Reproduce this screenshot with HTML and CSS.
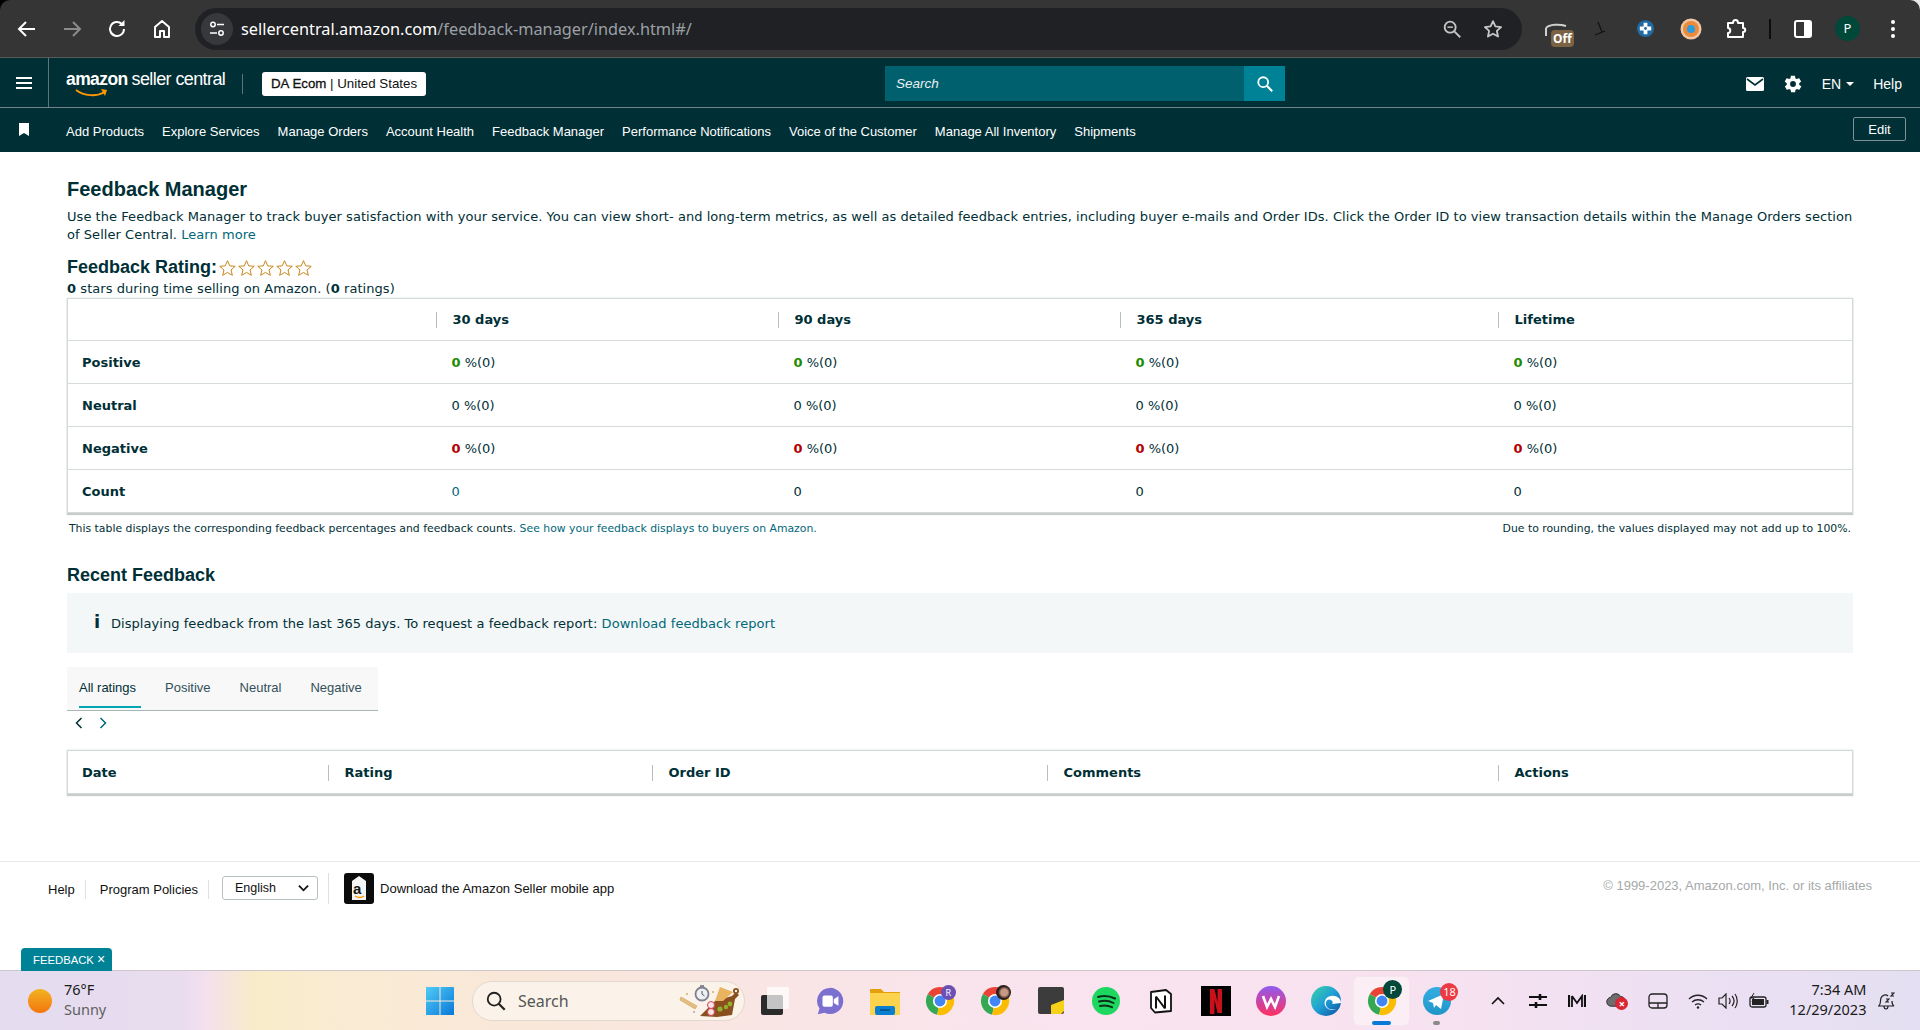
FILE: index.html
```html
<!DOCTYPE html>
<html lang="en">
<head>
    <meta charset="UTF-8">
    <meta name="viewport" content="width=device-width, initial-scale=1.0">
    <title>Feedback Manager</title>
    <link rel="stylesheet" href="styles.css">
</head>
<body>
    <svg class="defs" width="0" height="0">
        <symbol id="chrome" viewBox="0 0 32 32">
            <path d="M16 16L3 8.500A15 15 0 0 1 29 8.500z" fill="#ea4335"/>
            <path d="M16 16L3 8.500A15 15 0 0 0 13 30.700z" fill="#34a853"/>
            <path d="M16 16L29 8.500A15 15 0 0 1 13 30.700z" fill="#fbbc04"/>
            <circle cx="16" cy="16" r="7.500" fill="#fff"/>
            <circle cx="16" cy="16" r="5.800" fill="#4285f4"/>
        </symbol>
        <symbol id="star" viewBox="0.400 0.400 15.200 14.500">
            <path d="M8 1l2 4.700 5 .4-3.800 3.300 1.200 4.900L8 11.700l-4.400 2.600 1.200-4.900L1 6.100l5-.4z" fill="#fff" stroke="#c7861c" stroke-width=".9" stroke-linejoin="round"/>
        </symbol>
    </svg>

    <div class="browser">
        <div class="browser-nav">
            <svg class="bicon" viewBox="0 0 24 24"><path d="M20 12H5M11 5l-7 7 7 7" fill="none" stroke="#fff" stroke-width="2"/></svg>
            <svg class="bicon" viewBox="0 0 24 24"><path d="M4 12h15M13 5l7 7-7 7" fill="none" stroke="#8a8b8d" stroke-width="2"/></svg>
            <svg class="bicon" viewBox="0 0 24 24"><path d="M19 12a7 7 0 1 1-2.200-5.100" fill="none" stroke="#fff" stroke-width="2"/><path d="M19.500 3v6h-6z" fill="#fff"/></svg>
            <svg class="bicon" viewBox="0 0 24 24"><path d="M5 20V10l7-6 7 6v10h-5v-6h-4v6z" fill="none" stroke="#fff" stroke-width="2" stroke-linejoin="round"/></svg>
        </div>
        <div class="omnibox">
            <span class="site-info">
                <svg viewBox="0 0 20 20" width="20" height="20"><circle cx="6" cy="5.500" r="2.200" fill="none" stroke="#fff" stroke-width="1.500"/><path d="M10 5.500h7M3 14h7" stroke="#fff" stroke-width="1.700"/><circle cx="14" cy="14" r="2.200" fill="none" stroke="#fff" stroke-width="1.500"/></svg>
            </span>
            <span class="url">sellercentral.amazon.com<span class="url-path">/feedback-manager/index.html#/</span></span>
            <svg class="omni-icon" viewBox="0 0 24 24"><circle cx="10" cy="10" r="6" fill="none" stroke="#c4c7c5" stroke-width="2"/><path d="M14.500 14.500L21 21" stroke="#c4c7c5" stroke-width="2"/><path d="M7 10h6" stroke="#c4c7c5" stroke-width="1.600"/></svg>
            <svg class="omni-icon" viewBox="0 0 24 24"><path d="M12 3.500l2.600 5.700 6.200.7-4.600 4.200 1.300 6.100-5.500-3.100-5.500 3.100 1.300-6.100-4.600-4.200 6.200-.7z" fill="none" stroke="#c4c7c5" stroke-width="2" stroke-linejoin="round"/></svg>
        </div>
        <div class="browser-ext">
            <span class="ext ext-off">
                <svg viewBox="0 0 30 30" width="30" height="30"><path d="M5 14c3-4 14-4 20-2" fill="none" stroke="#cfcfcf" stroke-width="2"/><path d="M5 14v8" stroke="#cfcfcf" stroke-width="2"/></svg>
                <span class="off-badge">Off</span>
            </span>
            <span class="ext">
                <svg viewBox="0 0 24 24" width="24" height="24"><path d="M6 18L16 14M9 5l4 10" stroke="#111" stroke-width="1.200" fill="none"/></svg>
            </span>
            <span class="ext">
                <svg viewBox="0 0 20 20" width="19" height="19"><circle cx="10" cy="10" r="9" fill="#1f6aa5"/><path d="M8 4h4v4h4v4h-4v4H8v-4H4V8h4z" fill="#fff"/><circle cx="10" cy="10" r="1.500" fill="#1f6aa5"/></svg>
            </span>
            <span class="ext">
                <svg viewBox="0 0 22 22" width="22" height="22"><circle cx="11" cy="11" r="10.500" fill="#f2c6a4"/><circle cx="11" cy="11" r="8" fill="#ea8a3a"/><circle cx="11" cy="11" r="4" fill="#2a9de0"/></svg>
            </span>
            <span class="ext">
                <svg viewBox="0 0 24 24" width="24" height="24"><path d="M4 6h5c0-4 5-4 5 0h5v5c3 0 3 4 0 4v5H4v-4c3 0 3-5 0-5z" fill="none" stroke="#fff" stroke-width="2" stroke-linejoin="round"/></svg>
            </span>
            <span class="ext-sep"></span>
            <span class="ext">
                <svg viewBox="0 0 20 20" width="20" height="20"><rect x="2" y="2" width="16" height="16" rx="2" fill="none" stroke="#fff" stroke-width="2"/><rect x="11" y="2" width="7" height="16" fill="#fff"/></svg>
            </span>
            <span class="avatar">P</span>
            <span class="ext">
                <svg viewBox="0 0 6 20" width="6" height="20"><circle cx="3" cy="3" r="2" fill="#fff"/><circle cx="3" cy="10" r="2" fill="#fff"/><circle cx="3" cy="17" r="2" fill="#fff"/></svg>
            </span>
        </div>
    </div>

    <header class="top-bar">
        <button class="menu-btn" aria-label="Menu">
            <svg viewBox="0 0 16 12" width="16" height="12"><path d="M0 1h16M0 6h16M0 11h16" stroke="#fff" stroke-width="2"/></svg>
        </button>
        <div class="logo">
            <span class="logo-amazon">amazon</span><span class="logo-seller">seller central</span>
            <svg class="logo-smile" viewBox="0 0 34 10" width="34" height="10"><path d="M1 2c8 6 20 7 29 2" fill="none" stroke="#f90" stroke-width="2"/><path d="M26 1l6 1-2 6z" fill="#f90"/></svg>
        </div>
        <span class="logo-sep"></span>
        <div class="store-badge"><b>DA Ecom</b> | United States</div>
        <form class="search">
            <span class="search-input">Search</span>
            <span class="search-btn">
                <svg viewBox="0 0 20 20" width="18" height="18"><circle cx="8" cy="8" r="5.500" fill="none" stroke="#fff" stroke-width="2"/><path d="M12 12l6 6" stroke="#fff" stroke-width="2.400"/></svg>
            </span>
        </form>
        <div class="top-right">
            <svg viewBox="0 0 18 14" width="18" height="14"><rect width="18" height="14" rx="1.500" fill="#fff"/><path d="M1 2l8 6 8-6" fill="none" stroke="#002f36" stroke-width="1.600"/></svg>
            <svg viewBox="0 0 24 24" width="20" height="20"><path fill="#fff" d="M19.400 13c.1-.3.100-.7.100-1s0-.7-.1-1l2.100-1.600c.2-.2.200-.4.100-.6l-2-3.500c-.1-.2-.4-.3-.6-.2l-2.500 1c-.5-.4-1.100-.7-1.700-1l-.4-2.600c0-.3-.2-.4-.5-.4h-4c-.2 0-.4.100-.5.400l-.4 2.600c-.6.300-1.200.6-1.700 1l-2.500-1c-.2-.1-.5 0-.6.200l-2 3.500c-.1.200-.1.400.1.600L4.600 11c-.1.300-.1.700-.1 1s0 .7.100 1l-2.100 1.600c-.2.200-.2.400-.1.600l2 3.500c.1.200.4.300.6.200l2.500-1c.5.400 1.100.7 1.700 1l.4 2.600c0 .3.200.4.500.4h4c.3 0 .5-.1.500-.4l.4-2.600c.6-.3 1.200-.6 1.700-1l2.500 1c.2.100.5 0 .6-.2l2-3.500c.1-.2.100-.4-.1-.6zM12 15.500a3.500 3.500 0 1 1 0-7 3.500 3.500 0 0 1 0 7z"/></svg>
            <span class="lang">EN<i class="caret"></i></span>
            <span>Help</span>
        </div>
    </header>

    <nav class="nav-bar">
        <svg class="bookmark" viewBox="0 0 10 13" width="10" height="13"><path d="M0 0h10v13L5 10l-5 3z" fill="#fff"/></svg>
        <a>Add Products</a>
        <a>Explore Services</a>
        <a>Manage Orders</a>
        <a>Account Health</a>
        <a>Feedback Manager</a>
        <a>Performance Notifications</a>
        <a>Voice of the Customer</a>
        <a>Manage All Inventory</a>
        <a>Shipments</a>
        <button class="edit-btn">Edit</button>
    </nav>

    <main class="content">
        <h1>Feedback Manager</h1>
        <p class="intro">Use the Feedback Manager to track buyer satisfaction with your service. You can view short- and long-term metrics, as well as detailed feedback entries, including buyer e-mails and Order IDs. Click the Order ID to view transaction details within the Manage Orders section of Seller Central. <a class="link">Learn more</a></p>

        <div class="rating-head">
            <h2>Feedback Rating:</h2>
            <div class="stars">
                <svg width="17" height="16"><use href="#star"/></svg>
                <svg width="17" height="16"><use href="#star"/></svg>
                <svg width="17" height="16"><use href="#star"/></svg>
                <svg width="17" height="16"><use href="#star"/></svg>
                <svg width="17" height="16"><use href="#star"/></svg>
            </div>
        </div>
        <p class="rating-sub"><b>0</b> stars during time selling on Amazon. (<b>0</b> ratings)</p>

        <table class="card-table metrics">
            <thead>
                <tr>
                    <th></th>
                    <th><span>30 days</span></th>
                    <th><span>90 days</span></th>
                    <th><span>365 days</span></th>
                    <th><span>Lifetime</span></th>
                </tr>
            </thead>
            <tbody>
                <tr><th>Positive</th><td><b class="good">0</b> %(0)</td><td><b class="good">0</b> %(0)</td><td><b class="good">0</b> %(0)</td><td><b class="good">0</b> %(0)</td></tr>
                <tr><th>Neutral</th><td>0 %(0)</td><td>0 %(0)</td><td>0 %(0)</td><td>0 %(0)</td></tr>
                <tr><th>Negative</th><td><b class="bad">0</b> %(0)</td><td><b class="bad">0</b> %(0)</td><td><b class="bad">0</b> %(0)</td><td><b class="bad">0</b> %(0)</td></tr>
                <tr><th>Count</th><td><a class="link">0</a></td><td>0</td><td>0</td><td>0</td></tr>
            </tbody>
        </table>
        <div class="table-note">
            <span>This table displays the corresponding feedback percentages and feedback counts. <a class="link">See how your feedback displays to buyers on Amazon.</a></span>
            <span>Due to rounding, the values displayed may not add up to 100%.</span>
        </div>

        <h2 class="recent-title">Recent Feedback</h2>
        <div class="alert">
            <b class="alert-i">i</b>
            <span>Displaying feedback from the last 365 days. To request a feedback report: <a class="link">Download feedback report</a></span>
        </div>

        <div class="tabs">
            <a class="tab active">All ratings</a>
            <a class="tab">Positive</a>
            <a class="tab">Neutral</a>
            <a class="tab">Negative</a>
        </div>
        <div class="pager">
            <svg viewBox="0 0 8 12" width="8" height="12"><path d="M6.500 1L1.500 6l5 5" fill="none" stroke="#002f36" stroke-width="1.500"/></svg>
            <svg viewBox="0 0 8 12" width="8" height="12"><path d="M1.500 1l5 5-5 5" fill="none" stroke="#00687a" stroke-width="1.500"/></svg>
        </div>

        <table class="card-table recent">
            <thead>
                <tr>
                    <th>Date</th>
                    <th><span>Rating</span></th>
                    <th><span>Order ID</span></th>
                    <th><span>Comments</span></th>
                    <th><span>Actions</span></th>
                </tr>
            </thead>
        </table>
    </main>

    <footer class="footer">
        <a class="foot-link">Help</a>
        <a class="foot-link">Program Policies</a>
        <div class="foot-select">
            <span>English</span>
            <svg viewBox="0 0 12 8" width="11" height="8"><path d="M1 1.500l5 5 5-5" fill="none" stroke="#111" stroke-width="2"/></svg>
        </div>
        <div class="foot-app">
            <span class="app-icon">
                <svg viewBox="0 0 30 31" width="30" height="31"><rect width="30" height="31" rx="3" fill="#0b0b0b"/><path d="M8 8l7-5 7 5v19H8z" fill="#f4f4f4"/><path d="M11 23c3 2 6 2 9 0" fill="none" stroke="#f90" stroke-width="1.500"/></svg>
                <span class="app-a">a</span>
            </span>
            Download the Amazon Seller mobile app
        </div>
        <span class="copyright">© 1999-2023, Amazon.com, Inc. or its affiliates</span>
        <div class="feedback-tab">FEEDBACK <span class="feedback-x">×</span></div>
    </footer>

    <div class="taskbar">
        <div class="weather">
            <span class="sun"></span>
            <div class="weather-text">
                <span>76°F</span>
                <span class="weather-sub">Sunny</span>
            </div>
        </div>
        <div class="tb-start">
            <svg viewBox="0 0 30 30" width="30" height="30">
                <defs><linearGradient id="win" x1="0" y1="0" x2="1" y2="1"><stop offset="0" stop-color="#4fcbf7"/><stop offset="1" stop-color="#0a78d7"/></linearGradient></defs>
                <path d="M1 1h13.500v13.500H1zM15.500 1H29v13.500H15.500zM1 15.500h13.500V29H1zM15.500 15.500H29V29H15.500z" fill="url(#win)"/>
            </svg>
        </div>
        <div class="tb-search">
            <svg viewBox="0 0 24 24" width="22" height="22"><circle cx="10" cy="10" r="7" fill="none" stroke="#222" stroke-width="2"/><path d="M15 15l6.500 6.500" stroke="#222" stroke-width="2.400"/></svg>
            <span>Search</span>
            <svg class="tb-search-art" viewBox="0 0 64 36" width="64" height="36">
                <circle cx="24" cy="11" r="6.500" fill="#eef0f4" stroke="#7d7f8c" stroke-width="1.800"/>
                <path d="M24 8v3l2.500 2" stroke="#555" fill="none"/>
                <path d="M22 3h4" stroke="#7d7f8c" stroke-width="1.800"/>
                <path d="M3 14l16 9-2 3-15-9z" fill="#e4bf83" stroke="#c99a55" stroke-width=".6"/>
                <circle cx="9" cy="11" r="1" fill="#d5b05c"/>
                <circle cx="16" cy="29" r="1" fill="#a9a4c8"/>
                <circle cx="35" cy="9" r="1" fill="#d5b05c"/>
                <path d="M22 33l15-15 17-5 4-4 3 3-4 4-3 16-15 2z" fill="#8a4f1e"/>
                <circle cx="58" cy="8" r="3" fill="#8a4f1e"/>
                <circle cx="58" cy="8" r="1.200" fill="#fbf3e9"/>
                <path d="M37 18l5-14 13 5-10 9z" fill="#e9b35f"/>
                <circle cx="42" cy="26" r="2.600" fill="#94ae2f"/>
                <circle cx="48" cy="24" r="2.200" fill="#94ae2f"/>
                <circle cx="52" cy="21" r="2.400" fill="#94ae2f"/>
                <circle cx="33" cy="22" r="3.500" fill="#f7e3e6" stroke="#d8435a"/>
                <circle cx="33" cy="29" r="3.500" fill="#f7e3e6" stroke="#d8435a"/>
            </svg>
        </div>
        <div class="tb-apps">
            <span class="tb-app">
                <svg viewBox="0 0 32 32" width="32" height="32"><rect x="2" y="10" width="22" height="20" rx="2" fill="#2b2b2b"/><rect x="8" y="2" width="22" height="22" rx="1" fill="#fff" fill-opacity=".72"/></svg>
            </span>
            <span class="tb-app">
                <svg viewBox="0 0 32 32" width="30" height="32"><path d="M16 2a14 14 0 1 1-6 26.600L3 30l1.800-6A14 14 0 0 1 16 2z" fill="#7b6fd0"/><rect x="8" y="10" width="11" height="12" rx="2" fill="#fff"/><path d="M20 14l5-3v10l-5-3z" fill="#fff"/></svg>
            </span>
            <span class="tb-app">
                <svg viewBox="0 0 30 30" width="30" height="30"><path d="M0 3h11l3 3h16v23H0z" fill="#e3a008"/><path d="M0 7h30v22H0z" fill="#fcd34d"/><rect x="5" y="20" width="20" height="9" rx="2" fill="#0a7fd0"/><path d="M10 24h10" stroke="#054b86" stroke-width="1.500"/></svg>
            </span>
            <span class="tb-app tb-badged">
                <svg width="30" height="30"><use href="#chrome"/></svg>
                <span class="mini mini-r">R</span>
            </span>
            <span class="tb-app tb-badged">
                <svg width="30" height="30"><use href="#chrome"/></svg>
                <span class="mini mini-photo"></span>
            </span>
            <span class="tb-app">
                <svg viewBox="0 0 26 28" width="26" height="28"><rect width="26" height="27" rx="2" fill="#3c3c3c"/><path d="M13 27v-9l13-5v11l-3 3z" fill="#f7d118"/></svg>
            </span>
            <span class="tb-app">
                <svg viewBox="0 0 28 28" width="28" height="28"><circle cx="14" cy="14" r="14" fill="#1ed760"/><path d="M6 10c6-2 12-1 17 1.500M7 14.500c5-1.500 10-1 14.500 1.500M8 19c4-1 8-.700 12 1.200" fill="none" stroke="#0c2f1a" stroke-width="2" stroke-linecap="round"/></svg>
            </span>
            <span class="tb-app">
                <svg viewBox="0 0 24 26" width="24" height="26"><path d="M2 4l15-2 5 4v17l-16 1.500L2 20z" fill="#fff" stroke="#111" stroke-width="1.800" stroke-linejoin="round"/><path d="M7 8.500v12M7 8.500l9 12M16 7.500v13" fill="none" stroke="#111" stroke-width="2"/></svg>
            </span>
            <span class="tb-app">
                <svg viewBox="0 0 30 30" width="30" height="30"><rect width="30" height="30" fill="#000"/><path d="M9 3h4.500l3 13V3H21v24h-4.500l-3-13v14L9 28z" fill="#c8111a"/></svg>
            </span>
            <span class="tb-app">
                <svg viewBox="0 0 30 30" width="30" height="30"><defs><linearGradient id="wps" x1="0" y1="0" x2="0" y2="1"><stop offset="0" stop-color="#8f5bf0"/><stop offset="1" stop-color="#ff2f5f"/></linearGradient></defs><circle cx="15" cy="15" r="15" fill="url(#wps)"/><path d="M7 10l4 11 4-8 4 8 4-11" fill="none" stroke="#fff" stroke-width="2.600"/></svg>
            </span>
            <span class="tb-app">
                <svg viewBox="0 0 30 30" width="30" height="30"><defs><linearGradient id="edge" x1="0" y1="0" x2="1" y2="1"><stop offset="0" stop-color="#3bd3a5"/><stop offset=".5" stop-color="#1f9fd6"/><stop offset="1" stop-color="#0c4f9e"/></linearGradient></defs><circle cx="15" cy="15" r="15" fill="url(#edge)"/><path d="M30 17c0-5-5-8-10-7-6 1-8 7-5 11 2 3 7 4 11 2-8 2-12-2-11-7 1-3 4-3 5-2 2 1 2 3 1 4z" fill="#fff"/></svg>
            </span>
            <span class="tb-app tb-active tb-badged">
                <svg width="30" height="30"><use href="#chrome"/></svg>
                <span class="mini mini-p">P</span>
                <i class="tb-run"></i>
            </span>
            <span class="tb-app tb-badged">
                <svg viewBox="0 0 28 28" width="28" height="28"><defs><linearGradient id="tg" x1="0" y1="0" x2="0" y2="1"><stop offset="0" stop-color="#37aee2"/><stop offset="1" stop-color="#1e96c8"/></linearGradient></defs><circle cx="14" cy="14" r="14" fill="url(#tg)"/><path d="M5 14l16-7-3 15-5-4-2 3-1-5z" fill="#fff"/></svg>
                <span class="tg-count">18</span>
                <i class="tb-idle"></i>
            </span>
        </div>
        <div class="tray">
            <svg class="tray-chevron" viewBox="0 0 16 10" width="16" height="10"><path d="M2 8l6-6 6 6" fill="none" stroke="#111" stroke-width="1.600"/></svg>
            <svg class="tray-sliders" viewBox="0 0 18 16" width="18" height="16"><path d="M0 4h18M0 12h18" stroke="#111" stroke-width="2.200"/><path d="M11 1v6M7 9v6" stroke="#111" stroke-width="2.600"/></svg>
            <svg class="tray-m" viewBox="0 0 18 14" width="18" height="14"><path d="M1 1v12M17 1v12" stroke="#111" stroke-width="2.200"/><path d="M4 2l5 7 5-7v11M4 2v11" fill="none" stroke="#111" stroke-width="1.800"/></svg>
            <span class="tray-cloud">
                <svg viewBox="0 0 24 18" width="22" height="16"><path d="M6 16a5 5 0 0 1-1-10 6 6 0 0 1 11-1 5 5 0 0 1 3 9l-4 2z" fill="#6d6d6d" stroke="#222"/></svg>
                <i class="cloud-x">×</i>
            </span>
            <svg class="tray-pad" viewBox="0 0 20 16" width="20" height="16"><rect x="1" y="1" width="18" height="14" rx="3" fill="none" stroke="#222" stroke-width="1.300"/><path d="M1 10h18M10 10v5" stroke="#222" stroke-width="1.300"/></svg>
            <svg class="tray-wifi" viewBox="0 0 20 16" width="20" height="16"><path d="M1 6c5-5 13-5 18 0M4 9c3.500-3 8.500-3 12 0M7 12c2-1.500 4-1.500 6 0" fill="none" stroke="#222" stroke-width="1.300"/><circle cx="10" cy="14.500" r="1.200" fill="#222"/></svg>
            <svg class="tray-vol" viewBox="0 0 20 16" width="20" height="16"><path d="M1 5h3l4-4v14l-4-4H1z" fill="none" stroke="#222" stroke-width="1.200"/><path d="M11 5c1.500 2 1.500 4 0 6M14 3c2.500 3 2.500 7 0 10M17 1c3 4 3 10 0 14" fill="none" stroke="#222" stroke-width="1.200"/></svg>
            <svg class="tray-bat" viewBox="0 0 20 16" width="20" height="16"><rect x="1" y="4" width="16" height="10" rx="2" fill="none" stroke="#222" stroke-width="1.300"/><rect x="3" y="6" width="12" height="6" fill="#222"/><rect x="17.500" y="7" width="2" height="4" fill="#222"/><path d="M5 0L2 5h3L3 9" fill="none" stroke="#222"/></svg>
            <div class="clock">
                <span>7:34 AM</span>
                <span>12/29/2023</span>
            </div>
            <svg class="tray-bell" viewBox="0 0 18 20" width="18" height="20"><path d="M2 15c2-2 1-5 2-8s5-4 7-2M15 10c0 2 0 4 2 5H1M7 15c0 4 4 4 4 0" fill="none" stroke="#222" stroke-width="1.200"/><path d="M9 8h3l-3 3h3M14 2h3l-3 3h3" fill="none" stroke="#222" stroke-width="1.100"/></svg>
        </div>
    </div>
</body>
</html>
```

FILE: styles.css
```css
* {
    margin: 0;
    padding: 0;
    box-sizing: border-box;
}

html, body {
    height: 100%;
}

body {
    width: 1920px;
    height: 1030px;
    overflow: hidden;
    display: flex;
    flex-direction: column;
    font-family: "DejaVu Sans", Verdana, sans-serif;
    font-size: 13px;
    color: #002f36;
    /* window corners: black on the left, light on the right */
    background: linear-gradient(90deg, #000 50%, #e8e8e8 50%);
}

.defs {
    position: absolute;
}

.link {
    color: #00687a;
}

/* browser chrome */
.browser {
    height: 58px;
    flex: none;
    display: flex;
    align-items: center;
    background: #353535;
    border-radius: 10px 10px 0 0;
    border-bottom: 1px solid #5a5a5a;
    padding-left: 15px;
}

.browser-nav {
    flex: none;
    display: flex;
    gap: 21px;
    width: 180px;
}

.bicon {
    width: 24px;
    height: 24px;
}

.omnibox {
    flex: none;
    width: 1327px;
    height: 42px;
    display: flex;
    align-items: center;
    background: #202124;
    border-radius: 21px;
    padding: 0 18px 0 6px;
}

.site-info {
    width: 32px;
    height: 32px;
    border-radius: 50%;
    background: #36383b;
    display: flex;
    align-items: center;
    justify-content: center;
    margin-right: 8px;
}

.url {
    flex: 1;
    font-family: "Noto Sans", Roboto, sans-serif;
    font-size: 16.300px;
    color: #fff;
}

.url-path {
    color: #9aa0a6;
}

.omni-icon {
    width: 22px;
    height: 22px;
    margin-left: 19px;
}

.browser-ext {
    flex: none;
    display: flex;
    align-items: center;
    margin-left: 11px;
}

.ext {
    width: 45px;
    height: 30px;
    display: flex;
    align-items: center;
    justify-content: center;
}

.ext-off {
    position: relative;
}

.off-badge {
    position: absolute;
    left: 18px;
    top: 16px;
    width: 23px;
    height: 17px;
    border-radius: 4px;
    background: #7c6344;
    color: #fff;
    font: bold 12px/17px "Noto Sans", sans-serif;
    text-align: center;
}

.ext-sep {
    width: 2px;
    height: 20px;
    background: #0d0d0d;
    margin: 0 9px 0 11px;
}

.avatar {
    width: 25px;
    height: 25px;
    margin: 0 10px;
    border-radius: 50%;
    background: #00483a;
    color: #fff;
    font: 13px/25px "Noto Sans", sans-serif;
    text-align: center;
}

/* seller central header */
.top-bar {
    height: 50px;
    flex: none;
    display: flex;
    align-items: center;
    padding-top: 2px;
    background: #002f36;
    border-bottom: 1px solid #6f8588;
    color: #fff;
    font-family: "Liberation Sans", Arial, sans-serif;
}

.menu-btn {
    width: 49px;
    height: 49px;
    margin-top: -2px;
    background: none;
    border: none;
    border-right: 1px solid #5d7478;
    display: flex;
    align-items: center;
    justify-content: center;
}

.logo {
    position: relative;
    width: 176px;
    margin-left: 17px;
    display: flex;
    align-items: baseline;
    gap: 4px;
    height: 30px;
}

.logo-amazon {
    font-size: 17.500px;
    font-weight: bold;
    letter-spacing: -0.6px;
}

.logo-seller {
    font-size: 18px;
    letter-spacing: -0.6px;
}

.logo-smile {
    position: absolute;
    left: 9px;
    top: 19px;
}

.logo-sep {
    width: 1px;
    height: 20px;
    background: #5d7478;
}

.store-badge {
    margin-left: 19px;
    width: 164px;
    height: 24px;
    background: #fff;
    border-radius: 3px;
    color: #0f1111;
    font-size: 13.300px;
    line-height: 24px;
    text-align: center;
    white-space: nowrap;
}

.store-badge b {
    font-weight: normal;
    -webkit-text-stroke: 0.3px #0f1111;
}

.search {
    margin-left: 459px;
    width: 400px;
    height: 35px;
    display: flex;
    background: #00606e;
}

.search-input {
    flex: 1;
    padding-left: 11px;
    font-size: 13.500px;
    font-style: italic;
    line-height: 35px;
    color: #e8f1f2;
}

.search-btn {
    width: 41px;
    background: #008296;
    display: flex;
    align-items: center;
    justify-content: center;
}

.top-right {
    margin-left: auto;
    padding-right: 18px;
    display: flex;
    align-items: center;
    gap: 19px;
    font-size: 14px;
}

.lang {
    display: flex;
    align-items: center;
    gap: 5px;
}

.caret {
    width: 0;
    height: 0;
    border: 4px solid transparent;
    border-top: 4px solid #fff;
    border-bottom: 0;
}

/* nav favourites */
.nav-bar {
    height: 44px;
    flex: none;
    display: flex;
    align-items: center;
    gap: 18px;
    padding: 2px 14px 0 19px;
    background: #002f36;
    font-family: "Liberation Sans", Arial, sans-serif;
    font-size: 13px;
    color: #fff;
}

.bookmark {
    margin-right: 19px;
    margin-top: -4px;
}

.nav-bar a {
    white-space: nowrap;
}

.edit-btn {
    margin-left: auto;
    width: 53px;
    height: 24px;
    margin-top: -4px;
    background: none;
    border: 1px solid #7d9094;
    border-radius: 2px;
    color: #fff;
    font: 13px "Liberation Sans", Arial, sans-serif;
}

/* main */
.content {
    height: 709px;
    flex: none;
    background: #fff;
    padding: 25px 67px 0 67px;
}

h1 {
    font-family: "Liberation Sans", Arial, sans-serif;
    font-size: 20px;
    line-height: 24px;
    font-weight: bold;
}

.intro {
    margin: 7px -4px 0 0;
    line-height: 18px;
    letter-spacing: 0.05px;
}

.rating-head {
    margin-top: 11px;
    display: flex;
    align-items: center;
    height: 25px;
}

h2 {
    font-family: "Liberation Sans", Arial, sans-serif;
    font-size: 18px;
    font-weight: bold;
}

.stars {
    margin-left: 2px;
    display: flex;
    gap: 2px;
}

.rating-sub {
    line-height: 18px;
    letter-spacing: 0.06px;
}

.card-table {
    width: 100%;
    table-layout: fixed;
    border-collapse: collapse;
    background: #fff;
    border: 1px solid #d5dbdb;
    box-shadow: 0 2px 1px #c9cccc, 0 0 2px #d5dbdb;
}

.card-table th {
    text-align: left;
    font-weight: bold;
    padding-left: 14px;
    line-height: 16px;
}

.card-table td {
    padding-left: 16px;
    line-height: 16px;
}

.card-table tbody th,
.card-table tbody td,
.recent thead th {
    padding-top: 2px;
}

.metrics tr {
    height: 43px;
    border-bottom: 1px solid #d5dbdb;
}

.metrics tbody tr:last-child {
    border-bottom: none;
}

.metrics thead tr {
    height: 42px;
}

.card-table thead th span {
    display: block;
    margin-left: -14px;
    padding-left: 16px;
    border-left: 1px solid #b7c0c1;
    line-height: 16px;
}

.metrics th:nth-child(1) { width: 368px; }
.metrics th:nth-child(2) { width: 342px; }
.metrics th:nth-child(3) { width: 342px; }
.metrics th:nth-child(4) { width: 378px; }

.good {
    color: #1e8c00;
}

.bad {
    color: #b30000;
}

.table-note {
    margin-top: 9px;
    padding: 0 2px;
    display: flex;
    justify-content: space-between;
    font-size: 10.850px;
    line-height: 14px;
}

.recent-title {
    margin-top: 28px;
    line-height: 22px;
}

.alert {
    margin-top: 7px;
    height: 60px;
    display: flex;
    align-items: center;
    background: #f4f7f7;
    padding-left: 27px;
    letter-spacing: 0.05px;
}

.alert-i {
    width: 10px;
    margin-right: 7px;
    font-size: 18px;
    line-height: 18px;
    margin-top: -3px;
}

.tabs {
    margin-top: 14px;
    width: 311px;
    height: 44px;
    display: flex;
    background: #f8f8f8;
    border-bottom: 1px solid #aab7b8;
    padding-left: 12px;
    font-family: "Liberation Sans", Arial, sans-serif;
    font-size: 13px;
}

.tab {
    flex: none;
    margin-right: 29px;
    padding-top: 13px;
    line-height: 16px;
    color: #33505a;
    white-space: nowrap;
}

.tab.active {
    color: #002f36;
    width: 62px;
    margin-right: 24px;
    height: 41px;
    border-bottom: 2px solid #00a8b5;
}

.pager {
    display: flex;
    gap: 16px;
    height: 39px;
    padding: 6px 0 0 8px;
}

.recent tr {
    height: 43px;
}

.recent th:nth-child(1) { width: 260px; }
.recent th:nth-child(2) { width: 324px; }
.recent th:nth-child(3) { width: 395px; }
.recent th:nth-child(4) { width: 451px; }

/* footer */
.footer {
    position: relative;
    height: 109px;
    flex: none;
    display: flex;
    align-items: flex-start;
    background: #fff;
    border-top: 1px solid #e7e9e9;
    padding: 14px 48px 0 48px;
    font-family: "Liberation Sans", Arial, sans-serif;
    font-size: 13px;
    color: #0f1111;
}

.foot-link {
    height: 19px;
    line-height: 19px;
    margin-top: 4px;
    padding-right: 10px;
    margin-right: 13px;
    border-right: 1px solid #dde0e0;
}

.foot-link:first-child {
    margin-right: 14px;
}

.foot-select {
    width: 96px;
    height: 24px;
    display: flex;
    align-items: center;
    justify-content: space-between;
    padding: 0 8px 0 12px;
    border: 1px solid #b9c0c0;
    border-radius: 3px;
    font-size: 12.500px;
}

.foot-app {
    margin-left: 10px;
    display: flex;
    align-items: center;
    gap: 6px;
    height: 31px;
    margin-top: -3px;
    padding-left: 15px;
    border-left: 1px solid #dde0e0;
}

.app-icon {
    position: relative;
    width: 30px;
    height: 31px;
}

.app-a {
    position: absolute;
    left: 9px;
    top: 9px;
    font-size: 15px;
    line-height: 14px;
    font-weight: bold;
    color: #111;
}

.copyright {
    margin-left: auto;
    margin-top: 2px;
    font-size: 13px;
    line-height: 16px;
    color: #a5a9a9;
}

.feedback-tab {
    position: absolute;
    left: 21px;
    top: 86px;
    width: 91px;
    height: 23px;
    padding-left: 12px;
    border-radius: 4px 4px 0 0;
    background: #008296;
    color: #fff;
    font-size: 11.300px;
    line-height: 23px;
    white-space: nowrap;
}

.feedback-x {
    font-size: 14px;
}

/* windows taskbar */
.taskbar {
    height: 60px;
    flex: none;
    display: flex;
    align-items: center;
    border-top: 1px solid #cfc6cc;
    background: linear-gradient(90deg, #e4dcef 0, #e9dcef 180px, #f3e0ee 205px, #f8ecc8 255px, #f9ebd3 340px, #f9e6dc 600px, #f9e4ee 1000px, #f8e2f0 1400px, #ece0f3 1700px, #e4dff2 1920px);
    font-family: "Noto Sans", sans-serif;
    color: #1a1a1a;
}

.weather {
    width: 425px;
    display: flex;
    align-items: center;
    padding-left: 28px;
    gap: 12px;
}

.sun {
    width: 24px;
    height: 24px;
    border-radius: 50%;
    background: linear-gradient(#f2b321, #f3760f);
}

.weather-text {
    display: flex;
    flex-direction: column;
    margin-top: -3px;
    font-size: 14.500px;
    line-height: 20px;
}

.weather-sub {
    color: #5f5f5f;
}

.tb-start {
    width: 47px;
    display: flex;
}

.tb-search {
    width: 273px;
    height: 40px;
    display: flex;
    align-items: center;
    padding-left: 12px;
    gap: 11px;
    border-radius: 20px;
    background: #fbf3e9;
    border: 1px solid #e3d8cf;
    font-size: 16px;
    color: #555;
}

.tb-search-art {
    margin-left: auto;
    margin-right: 2px;
}

.tb-apps {
    margin-left: 2px;
    display: flex;
}

.tb-app {
    position: relative;
    width: 55.200px;
    height: 48px;
    display: flex;
    align-items: center;
    justify-content: center;
}

.tb-active {
    background: #fbeef5;
    border-radius: 5px;
    box-shadow: 0 0 0 1px #f5e5ee;
}

.tb-run {
    position: absolute;
    left: 18px;
    bottom: 0;
    width: 19px;
    height: 4px;
    border-radius: 2px;
    background: #0a78d7;
}

.tb-idle {
    position: absolute;
    left: 24px;
    bottom: 0;
    width: 7px;
    height: 4px;
    border-radius: 2px;
    background: #8a8a8a;
}

.mini {
    position: absolute;
    top: 8px;
    right: 12px;
    width: 15px;
    height: 15px;
    border-radius: 50%;
    color: #fff;
    font-size: 9px;
    line-height: 15px;
    text-align: center;
}

.mini-r {
    background: #6b4fb5;
}

.mini-photo {
    background: radial-gradient(circle at 55% 50%, #c89a84 0 30%, #2b1d1c 55%);
}

.mini-p {
    background: #00483a;
    top: 3px;
    right: 7px;
    width: 19px;
    height: 19px;
    line-height: 19px;
    font-size: 11px;
}

.tg-count {
    position: absolute;
    top: 6px;
    right: 6px;
    width: 18px;
    height: 18px;
    border-radius: 50%;
    background: #ec3942;
    color: #fff;
    font-size: 11px;
    line-height: 18px;
    text-align: center;
}

.tray {
    flex: 1;
    display: flex;
    align-items: center;
    padding-left: 26px;
}

.tray-sliders {
    margin-left: 23px;
}

.tray-m {
    margin-left: 21px;
}

.tray-cloud {
    position: relative;
    margin-left: 20px;
    width: 22px;
    height: 18px;
}

.cloud-x {
    position: absolute;
    left: 9px;
    top: 5px;
    width: 13px;
    height: 13px;
    border-radius: 50%;
    background: #d92632;
    color: #fff;
    font: bold 11px/13px "Noto Sans", sans-serif;
    text-align: center;
}

.tray-pad {
    margin-left: 20px;
}

.tray-wifi {
    margin-left: 20px;
}

.tray-vol {
    margin-left: 10px;
}

.tray-bat {
    margin-left: 11px;
}

.clock {
    width: 87px;
    margin-left: 10px;
    margin-top: -3px;
    display: flex;
    flex-direction: column;
    align-items: flex-end;
    font-size: 14.500px;
    line-height: 20px;
    white-space: nowrap;
}

.tray-bell {
    margin-left: 11px;
}
```
